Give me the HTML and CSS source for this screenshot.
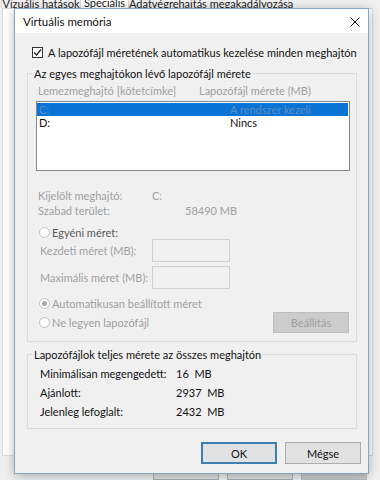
FILE: index.html
```html
<!DOCTYPE html>
<html lang="hu">
<head>
<meta charset="utf-8">
<title>Virtuális memória</title>
<link rel="stylesheet" href="styles.css">
</head>
<body>
<div class="bgwin">
  <div class="tabs">
    <div class="tab t1">Vizuális hatások</div>
    <div class="tab t2">Speciális</div>
    <div class="tab t3">Adatvégrehajtás megakadályozása</div>
  </div>
  <div class="panel"></div>
  <div class="bgbtns"><div class="bgbtn"></div><div class="bgbtn"></div><div class="bgbtn dis"></div></div>
</div>

<div class="dialog">
  <div class="titlebar">
    <span class="title">Virtuális memória</span>
    <svg class="close" width="10" height="10" viewBox="0 0 10 10"><path d="M0.5 0.5 L9.5 9.5 M9.5 0.5 L0.5 9.5" stroke="#111" stroke-width="1" fill="none"/></svg>
  </div>
  <div class="body">
    <div class="check">
      <span class="cbox"><svg width="9" height="9" viewBox="0 0 9 9"><path d="M1 4.5 L3.5 7 L8 1.5" stroke="#222" stroke-width="1.2" fill="none"/></svg></span>
      <span>A lapozófájl méretének automatikus kezelése minden meghajtón</span>
    </div>

    <fieldset class="group g1">
      <legend>Az egyes meghajtókon lévő lapozófájl mérete</legend>
      <div class="colhead dim"><span class="hc1">Lemezmeghajtó [kötetcímke]</span><span>Lapozófájl mérete (MB)</span></div>
      <div class="listbox">
        <div class="lrow sel"><span class="lc1">C:</span><span>A rendszer kezeli</span></div>
        <div class="lrow"><span class="lc1">D:</span><span>Nincs</span></div>
      </div>
      <div class="info first dim"><span class="ic1">Kijelölt meghajtó:</span><span>C:</span></div>
      <div class="info dim"><span class="ic1">Szabad terület:</span><span class="num">58490 MB</span></div>
      <div class="radio r-custom"><span class="rb"></span><span class="mid">Egyéni méret:</span></div>
      <div class="size s1 dim"><span class="sc1">Kezdeti méret (MB):</span><span class="inp"></span></div>
      <div class="size s2 dim"><span class="sc1">Maximális méret (MB):</span><span class="inp"></span></div>
      <div class="radio r-auto dim"><span class="rb on"></span><span>Automatikusan beállított méret</span></div>
      <div class="lastrow">
        <div class="radio dim"><span class="rb"></span><span>Ne legyen lapozófájl</span></div>
        <div class="btn disbtn">Beállítás</div>
      </div>
    </fieldset>

    <fieldset class="group g2">
      <legend>Lapozófájlok teljes mérete az összes meghajtón</legend>
      <div class="trow first"><span class="tc1">Minimálisan megengedett:</span><span>16&nbsp; MB</span></div>
      <div class="trow"><span class="tc1">Ajánlott:</span><span>2937&nbsp; MB</span></div>
      <div class="trow"><span class="tc1">Jelenleg lefoglalt:</span><span>2432&nbsp; MB</span></div>
    </fieldset>

    <div class="buttons">
      <div class="btn ok">OK</div>
      <div class="btn">Mégse</div>
    </div>
  </div>
</div>
</body>
</html>
```

FILE: styles.css
```css
* { box-sizing: border-box; }
html, body { margin: 0; padding: 0; }
body {
  width: 380px; height: 480px; overflow: hidden; position: relative;
  background: #f0f0f0;
  font-family: Lato, "Noto Sans", sans-serif;
  font-size: 11px; line-height: 15px; color: #111; white-space: nowrap;
}

/* background window */
.bgwin { display: flex; flex-direction: column; height: 480px; }
.tabs { height: 8px; overflow: hidden; display: flex; align-items: flex-end; padding-left: 1px; }
.tab {
  height: 10px; line-height: 10px; text-align: center;
  border: 1px solid #d9d9d9; border-bottom: 0; margin-right: -1px; background: #f0f0f0; color: #222;
}
.t1 { width: 80px; }
.t2 { width: 49px; background: #fff; height: 11px; }
.t3 { width: 161px; }
.panel { height: 458px; margin: 0 7px 0 2px; background: #fff; border: 1px solid #d9d9d9; }
.bgbtns { display: flex; gap: 8px; padding-left: 153px; margin-top: 1px; }
.bgbtn { width: 66px; height: 23px; background: #e1e1e1; border: 1px solid #adadad; }
.bgbtn.dis { background: #cccccc; border-color: #bfbfbf; }

/* dialog */
.dialog {
  position: absolute; left: 14px; top: 8px; width: 355px; height: 466px;
  border: 1px solid #7fa7c9; background: #f0f0f0;
  box-shadow: 0 2px 10px rgba(0,0,0,.28);
  display: flex; flex-direction: column;
}
.titlebar {
  height: 24px; background: #fff; display: flex; align-items: center; justify-content: space-between;
  padding: 0 8px 0 8px; font-size: 11.5px;
}
.close { display: block; margin-top: 1px; }
.body { padding: 0 11px 0 12px; }

.check { display: flex; align-items: center; gap: 5px; height: 14px; margin: 12px 0 0 5px; }
.cbox { width: 11px; height: 11px; border: 1px solid #333; background: #fff; display: flex; align-items: center; justify-content: center; }
.cbox svg { display: block; }

.group { margin: 7px 0 0; padding: 0 6px 8px 8px; border: 1px solid #dcdcdc; min-width: 0; }
.group legend { padding: 0 1px; margin-left: -3px; line-height: 15px; }
.dim { color: #a0a0a0; }

.colhead { display: flex; margin-top: 2px; padding-left: 2px; }
.hc1 { width: 161px; }
.listbox { margin-top: 3px; height: 70px; border: 1px solid #828790; background: #fff; padding: 1px 1px 0 0; }
.lrow { display: flex; height: 13px; line-height: 13px; padding-left: 2px; }
.lrow.sel { background: #0a74d6; color: #5f8cc4; }
.lc1 { width: 191px; }

.info { display: flex; padding-left: 2px; }
.info.first { margin-top: 17px; }
.ic1 { width: 114px; }
.num { margin-left: 33px; }

.radio { display: flex; align-items: center; gap: 2px; height: 14px; padding-left: 3px; }
.rb { width: 11px; height: 11px; border-radius: 50%; border: 1px solid #c0c0c0; background: #fff; display: flex; align-items: center; justify-content: center; }
.rb.on::after { content: ""; width: 5px; height: 5px; border-radius: 50%; background: #a8a8a8; }
.r-custom { margin-top: 7px; }
.mid { color: #5a5a5a; }

.size { display: flex; align-items: center; height: 23px; padding-left: 4px; }
.s2 { margin-top: 4px; }
.sc1 { width: 112px; }
.inp { width: 78px; height: 23px; border: 1px solid #cfcfcf; background: #f0f0f0; }

.r-auto { margin-top: 7px; }
.lastrow { display: flex; align-items: center; justify-content: space-between; margin-top: 2px; height: 21px; padding-right: 1px; }

.btn {
  width: 76px; height: 22px; border: 1px solid #adadad; background: #e1e1e1;
  display: flex; align-items: center; justify-content: center;
}
.disbtn { height: 21px; background: #cccccc; border-color: #bfbfbf; color: #a0a0a0; }

.g2 { margin-top: 5px; padding: 0 6px 7px 12px; }
.g2 legend { margin-left: -7px; }
.trow { display: flex; height: 19px; line-height: 19px; }
.trow.first { margin-top: 2px; }
.tc1 { width: 136px; }

.buttons { display: flex; justify-content: flex-end; gap: 8px; margin-top: 13px; margin-right: -4px; }
.btn.ok { border: 2px solid #3c7fb1; }
```
